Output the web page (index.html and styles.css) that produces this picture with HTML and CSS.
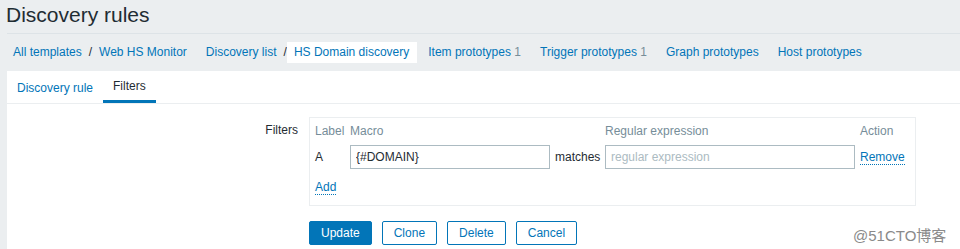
FILE: index.html
```html
<!DOCTYPE html>
<html lang="en">
<head>
  <meta charset="UTF-8">
  <meta name="viewport" content="width=device-width, initial-scale=1.0">
  <title>Discovery rules</title>
  <link rel="stylesheet" href="styles.css">
</head>
<body>
  <header class="header-title">
    <h1>Discovery rules</h1>
  </header>

  <nav class="object-nav">
    <ul class="group">
      <li><a href="#">All templates</a></li>
      <li class="sep">/</li>
      <li><a href="#">Web HS Monitor</a></li>
    </ul>
    <ul class="group">
      <li><a href="#">Discovery list</a></li>
      <li class="sep">/</li>
      <li class="selected"><a href="#">HS Domain discovery</a></li>
    </ul>
    <ul class="group">
      <li><a href="#">Item prototypes</a> <sup class="count">1</sup></li>
    </ul>
    <ul class="group">
      <li><a href="#">Trigger prototypes</a> <sup class="count">1</sup></li>
    </ul>
    <ul class="group">
      <li><a href="#">Graph prototypes</a></li>
    </ul>
    <ul class="group">
      <li><a href="#">Host prototypes</a></li>
    </ul>
  </nav>

  <main class="container">
    <ul class="tabs">
      <li><a href="#">Discovery rule</a></li>
      <li class="active"><a href="#">Filters</a></li>
    </ul>

    <div class="form-row">
      <label class="form-label">Filters</label>
      <div class="form-field">
        <div class="filter-table">
          <span class="th">Label</span>
          <span class="th">Macro</span>
          <span class="th"></span>
          <span class="th">Regular expression</span>
          <span class="th">Action</span>

          <span class="cell">A</span>
          <input class="text-input" type="text" value="{#DOMAIN}">
          <span class="cell">matches</span>
          <input class="text-input" type="text" placeholder="regular expression">
          <a class="link-action" href="#">Remove</a>

          <a class="link-action add" href="#">Add</a>
        </div>
      </div>
    </div>

    <div class="form-buttons">
      <button class="btn primary">Update</button>
      <button class="btn">Clone</button>
      <button class="btn">Delete</button>
      <button class="btn">Cancel</button>
    </div>
  </main>

  <div class="watermark">@51CTO博客</div>
</body>
</html>
```

FILE: styles.css
```css
body {
  margin: 0;
  font-family: Arial, "Liberation Sans", "Noto Sans CJK SC", sans-serif;
  font-size: 12px;
  color: #1f2c33;
  background: #ebeef0;
  height: 249px;
  overflow: hidden;
  position: relative;
}
a {
  color: #0275b8;
  text-decoration: none;
}
ul {
  list-style: none;
  margin: 0;
  padding: 0;
}

/* header */
.header-title {
  height: 33px;
  margin-left: 7px;
  border-bottom: 1px solid #dde3e7;
}
.header-title h1 {
  margin: 0 0 0 -1px;
  font-size: 21px;
  font-weight: normal;
  line-height: 30px;
}

/* object navigation */
.object-nav {
  display: flex;
  align-items: center;
  height: 37px;
  padding-left: 13px;
}
.group {
  display: flex;
  align-items: center;
  margin-right: 19px;
}
.group li {
  line-height: 21px;
}
.sep {
  margin: 0 7px;
  color: #1f2c33;
}
.selected {
  background: #fff;
  margin-left: -7px;
  padding: 0 8px 0 7px;
}
.group:has(.selected) {
  margin-right: 11px;
}
.count {
  color: #768d99;
  font-size: 12px;
  vertical-align: baseline;
}

/* main container */
.container {
  margin-left: 7px;
  background: #fff;
  height: 178px;
}
.tabs {
  display: flex;
  height: 32px;
  border-bottom: 1px solid #ebeef0;
}
.tabs li {
  padding: 2px 10px 0;
  line-height: 30px;
}
.tabs li.active {
  border-bottom: 3px solid #0275b8;
  line-height: 27px;
}
.tabs li.active a {
  color: #1f2c33;
}

/* form */
.form-row {
  display: flex;
  padding-top: 13px;
}
.form-label {
  width: 291px;
  text-align: right;
  padding-right: 11px;
  line-height: 26px;
}
.filter-table {
  width: 595px;
  border: 1px solid #ebeef0;
  padding: 4px 5px 7px;
  display: grid;
  grid-template-columns: 30px 200px 45px 250px auto;
  grid-template-rows: 18px 24px 24px;
  column-gap: 5px;
  row-gap: 5px;
  align-items: center;
}
.filter-table .th {
  color: #768d99;
}
.text-input {
  box-sizing: border-box;
  height: 24px;
  width: 100%;
  margin: 0;
  padding: 0 5px;
  border: 1px solid #acbbc2;
  font-family: inherit;
  font-size: 12px;
  color: #1f2c33;
  outline: none;
}
.text-input::placeholder {
  color: #acbbc2;
}
.link-action {
  justify-self: start;
  border-bottom: 1px dotted #0275b8;
  line-height: 14px;
}
.add {
  grid-column: 1 / span 2;
  margin-top: 2px;
}

.form-buttons {
  display: flex;
  gap: 10px;
  padding: 15px 0 0 302px;
}
.btn {
  height: 24px;
  padding: 0 11px;
  border: 1px solid #0275b8;
  border-radius: 2px;
  background: #fff;
  color: #0275b8;
  font-family: inherit;
  font-size: 12px;
  cursor: pointer;
}
.btn.primary {
  background: #0275b8;
  color: #fff;
}

.watermark {
  position: absolute;
  left: 853px;
  top: 224px;
  font-size: 15px;
  color: #8a8a8a;
  text-shadow: 0 0 2px #fff;
}
```
